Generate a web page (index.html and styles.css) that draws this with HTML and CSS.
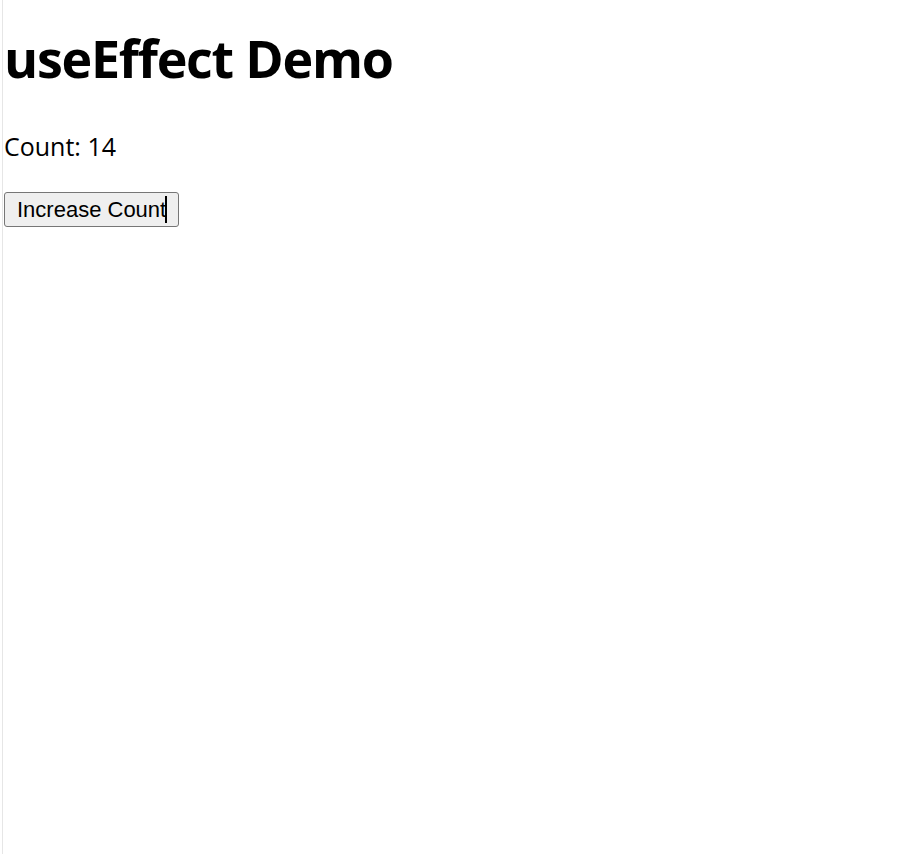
FILE: index.html
```html
<!DOCTYPE html>
<html>
<head>
<meta charset="utf-8">
<link rel="stylesheet" href="styles.css">
</head>
<body>
<div class="page">
  <h1 class="title">useEffect Demo</h1>
  <p class="count">Count: 14</p>
  <button class="btn">Increase Count<span class="caret"></span></button>
</div>
</body>
</html>
```
FILE: styles.css
```css
html, body {
  margin: 0;
  padding: 0;
  background: #fff;
  height: 100%;
}
.page {
  margin-left: 2px;
  border-left: 1px solid #e6e6e6;
  padding-left: 1px;
  min-height: 100%;
  box-sizing: border-box;
  padding-top: 1px;
  font-family: "Open Sans", "Noto Sans", sans-serif;
  color: #000;
}
.title {
  margin: 22px 0 0 0;
  font-size: 52px;
  font-weight: 700;
  line-height: 70px;
  letter-spacing: -1.25px;
}
.count {
  margin: 38px 0 0 0;
  font-size: 25px;
  line-height: 30px;
}
.btn {
  position: relative;
  margin-top: 31px;
  font-family: "Liberation Sans", Arial, sans-serif;
  font-size: 22px;
  line-height: 25px;
  padding: 4px 12px;
  height: 35px;
  background: #efefef;
  border: 1px solid #767676;
  border-radius: 3px;
  color: #000;
  display: block;
}
.caret {
  position: absolute;
  left: 160px;
  top: 3px;
  width: 2px;
  height: 27px;
  background: #000;
}
```
